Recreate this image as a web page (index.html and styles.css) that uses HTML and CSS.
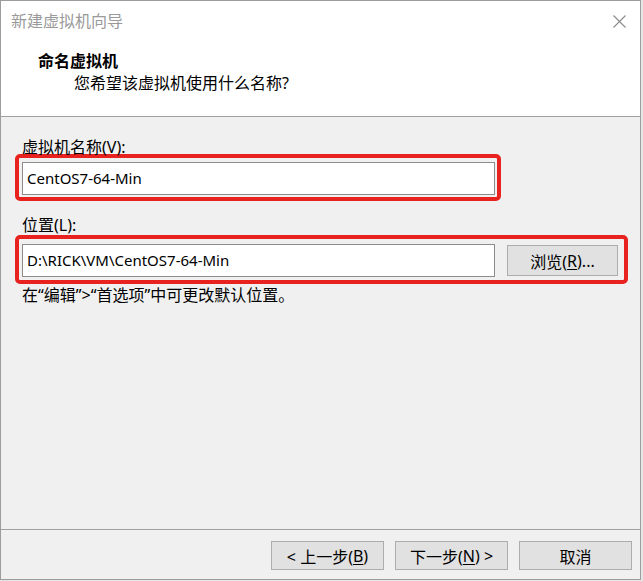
FILE: index.html
```html
<!DOCTYPE html>
<html lang="zh-CN">
<head>
<meta charset="utf-8">
<title>新建虚拟机向导</title>
<link rel="stylesheet" href="styles.css">
</head>
<body>
<div class="window">
  <div class="titlebar">
    <span class="title">新建虚拟机向导</span>
    <svg class="close" width="13" height="13" viewBox="0 0 13 13"><path d="M0.5 0.5L12.5 12.5M12.5 0.5L0.5 12.5" stroke="#8a8a8a" stroke-width="1.1" fill="none"/></svg>
  </div>
  <div class="header">
    <div class="heading">命名虚拟机</div>
    <div class="subtitle">您希望该虚拟机使用什么名称?</div>
  </div>
  <div class="content">
    <div class="label">虚拟机名称(V):</div>
    <div class="mark mark-name">
      <div class="field">CentOS7-64-Min</div>
    </div>
    <div class="label label-loc">位置(L):</div>
    <div class="mark mark-loc">
      <div class="field">D:\RICK\VM\CentOS7-64-Min</div>
      <div class="btn browse">浏览(<u>R</u>)...</div>
    </div>
    <div class="note">在“编辑”&gt;“首选项”中可更改默认位置。</div>
  </div>
  <div class="footer">
    <div class="btn nav">&lt; 上一步(<u>B</u>)</div>
    <div class="btn nav">下一步(<u>N</u>) &gt;</div>
    <div class="btn nav">取消</div>
  </div>
</div>
</body>
</html>
```

FILE: styles.css
```css
* { box-sizing: border-box; }

html, body {
  margin: 0;
  padding: 0;
}

body {
  background: #e6e6e6;
  font-family: "Noto Sans", "Noto Sans CJK SC", sans-serif;
  font-size: 16px;
  color: #000;
  width: 643px;
  height: 581px;
  overflow: hidden;
}

.window {
  width: 641px;
  height: 580px;
  border: 1px solid #9c9c9c;
  background: #f0f0f0;
  display: flex;
  flex-direction: column;
}

.titlebar {
  height: 40px;
  background: #fff;
  display: flex;
  align-items: center;
  padding-left: 10px;
}

.title {
  color: #9a9a9a;
  font-size: 16px;
  line-height: 20px;
}

.close {
  margin-left: auto;
  margin-right: 14px;
  margin-top: 1px;
}

.header {
  height: 76px;
  background: #fff;
  border-bottom: 1px solid #a0a0a0;
  padding-top: 9px;
}

.heading {
  font-weight: bold;
  font-size: 16px;
  line-height: 22px;
  padding-left: 37px;
}

.subtitle {
  font-size: 16px;
  line-height: 22px;
  padding-left: 73px;
}

.content {
  flex: 1;
  padding: 20px 0 0 21px;
}

.label {
  line-height: 20px;
  height: 20px;
}

.label-loc {
  margin-top: 14px;
}

.mark {
  border: 4px solid #e8231f;
  border-radius: 5px;
  margin-left: -7px;
  display: flex;
  align-items: flex-start;
}

.mark-name {
  width: 486px;
  margin-top: -3px;
  padding: 4px 2px 2px 3px;
}

.mark-loc {
  width: 613px;
  padding: 5px 6px 3px 3px;
  gap: 12px;
}

.field {
  width: 473px;
  height: 33px;
  background: #fff;
  border: 1px solid #8c8c8c;
  padding-left: 4px;
  font-size: 15px;
  line-height: 31px;
  white-space: nowrap;
}

.btn {
  background: #e1e1e1;
  border: 1px solid #adadad;
  display: flex;
  align-items: center;
  justify-content: center;
  font-size: 16px;
  white-space: nowrap;
}

.btn u {
  text-underline-offset: 2px;
}

.browse {
  width: 111px;
  height: 31px;
  margin-top: 1px;
}

.note {
  line-height: 20px;
  margin-top: 1px;
}

.footer {
  height: 50px;
  border-top: 1px solid #a0a0a0;
  display: flex;
  justify-content: flex-end;
  align-items: flex-start;
  gap: 11px;
  padding: 11px 8px 0 0;
}

.nav {
  width: 113px;
  height: 29px;
}
```
